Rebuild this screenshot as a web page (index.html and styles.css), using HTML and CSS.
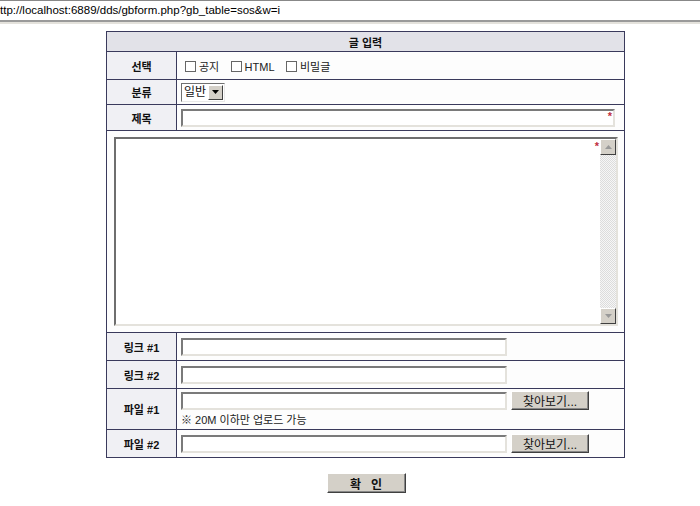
FILE: index.html
```html
<!DOCTYPE html>
<html lang="ko">
<head>
  <meta charset="UTF-8" />
  <title>gbform</title>
  <link rel="stylesheet" href="styles.css">
</head>
<body>
  <!-- 주소창 -->
  <div class="addr-bar">ttp://localhost:6889/dds/gbform.php?gb_table=sos&amp;w=i</div>

  <div class="wrap">
    <table class="form-table">
      <tr class="row-head">
        <th colspan="2">글 입력</th>
      </tr>
      <tr class="row-opt">
        <td class="label">선택</td>
        <td class="field">
          <span class="chk"></span><span class="chk-text">공지</span>
          <span class="chk"></span><span class="chk-text">HTML</span>
          <span class="chk"></span><span class="chk-text">비밀글</span>
        </td>
      </tr>
      <tr class="row-cat">
        <td class="label">분류</td>
        <td class="field">
          <span class="select"><span class="select-val">일반</span><span class="select-btn"><svg width="7" height="4" viewBox="0 0 7 4"><path d="M0 0H7L3.5 4Z" fill="#000"/></svg></span></span>
        </td>
      </tr>
      <tr class="row-subj">
        <td class="label">제목</td>
        <td class="field">
          <span class="need-wrap"><span class="input full"></span><span class="star">*</span></span>
        </td>
      </tr>
      <tr class="row-memo">
        <td colspan="2" class="memo-cell">
          <div class="memo">
            <div class="memo-text"></div>
            <span class="star memo-star">*</span>
            <div class="scroll">
              <span class="sc-btn"><svg width="7" height="4" viewBox="0 0 7 4"><path d="M0 4H7L3.5 0Z" fill="#999"/></svg></span>
              <span class="sc-track"></span>
              <span class="sc-btn"><svg width="7" height="4" viewBox="0 0 7 4"><path d="M0 0H7L3.5 4Z" fill="#999"/></svg></span>
            </div>
          </div>
        </td>
      </tr>
      <tr class="row-link">
        <td class="label">링크 #1</td>
        <td class="field"><span class="input"></span></td>
      </tr>
      <tr class="row-link">
        <td class="label">링크 #2</td>
        <td class="field"><span class="input"></span></td>
      </tr>
      <tr class="row-file1">
        <td class="label">파일 #1</td>
        <td class="field">
          <div class="file-line"><span class="input"></span><span class="btn">찾아보기...</span></div>
          <div class="note">※ 20M 이하만 업로드 가능</div>
        </td>
      </tr>
      <tr class="row-link">
        <td class="label">파일 #2</td>
        <td class="field">
          <div class="file-line"><span class="input"></span><span class="btn">찾아보기...</span></div>
        </td>
      </tr>
    </table>

    <div class="submit-row">
      <span class="btn submit">확&nbsp;&nbsp;&nbsp;인</span>
    </div>
  </div>
</body>
</html>
```

FILE: styles.css
```css
:root {
  --line: #3a3a5c;
  --head: #e2e2e8;
  --label: #f0f0f4;
  --face: #d4d0c8;
}
html, body {
  margin: 0; padding: 0;
  background: #fff;
  color: #111;
  font-family: 'Liberation Sans', 'Noto Sans CJK KR', sans-serif;
  font-size: 12px;
}
.addr-bar {
  height: 19px;
  line-height: 19px;
  font-size: 11.5px;
  color: #000;
  border-top: 1px solid #888;
  border-bottom: 2px solid #9a9a9a;
  box-shadow: 0 2px 0 #e4e2dc;
}
.wrap {
  width: 518px;
  margin: 9px 0 0 106px;
}
.form-table {
  width: 518px;
  border-collapse: collapse;
  border: 1px solid var(--line);
}
.form-table th, .form-table td {
  border: 1px solid var(--line);
  padding: 0;
}
.row-head th {
  height: 19px;
  background: var(--head);
  font-size: 11px;
  font-weight: bold;
  text-align: center;
}
.label {
  width: 69px;
  background: var(--label);
  text-align: center;
  font-size: 11px;
  font-weight: bold;
  color: #111;
}
.field {
  background: #fdfdfd;
  padding-left: 4px !important;
}
.row-opt td { height: 27px; }
.row-cat td { height: 24px; }
.row-subj td { height: 25px; }
.row-link td { height: 27px; }
.row-file1 td { height: 40px; }

.chk {
  display: inline-block;
  width: 9px; height: 9px;
  border: 1px solid #666;
  background: #fff;
  vertical-align: -1px;
  margin: 0 3px 0 4px;
}
.chk-text {
  font-size: 11px;
  margin-right: 4px;
  color: #222;
}

.select {
  display: inline-flex;
  align-items: center;
  height: 17px;
  border: 1px solid;
  border-color: #707070 #e8e8e8 #e8e8e8 #707070;
  background: #fff;
  vertical-align: middle;
}
.select-val { padding: 0 2px; line-height: 17px; }
.select-btn {
  width: 13px; height: 13px;
  margin-right: 1px;
  background: var(--face);
  border: 1px solid;
  border-color: #fff #404040 #404040 #fff;
  display: flex;
  align-items: center;
  justify-content: center;
}

.input {
  display: inline-block;
  box-sizing: border-box;
  width: 326px;
  height: 18px;
  border: 2px solid;
  border-color: #7a7a7a #e4e2dc #e4e2dc #7a7a7a;
  background: #fff;
  vertical-align: middle;
}
.input.full { width: 434px; }
.need-wrap {
  position: relative;
  display: inline-block;
  vertical-align: middle;
}
.need-wrap .input { display: block; }
.star {
  position: absolute;
  color: #c03040;
  font-size: 11px;
  line-height: 1;
  font-weight: bold;
}
.need-wrap .star { right: 3px; top: 2px; }

.memo-cell { padding: 6px 6px 6px 7px !important; background: #fdfdfd; }
.memo {
  position: relative;
  display: flex;
  box-sizing: border-box;
  width: 504px;
  height: 189px;
  border: 2px solid;
  border-color: #6e6e6e #e4e2dc #e4e2dc #6e6e6e;
  background: #fff;
}
.memo-text { flex: 1; }
.memo-star { right: 17px; top: 2px; }
.scroll {
  width: 16px;
  display: flex;
  flex-direction: column;
}
.sc-btn {
  box-sizing: border-box;
  height: 16px;
  background: var(--face);
  border: 1px solid;
  border-color: #fff #404040 #404040 #fff;
  display: flex;
  align-items: center;
  justify-content: center;
}
.sc-track {
  flex: 1;
  background-color: #f2f2f2;
  background-image: repeating-conic-gradient(#dcdcdc 0 25%, #f6f6f6 0 50%);
  background-size: 2px 2px;
}

.file-line {
  display: flex;
  align-items: center;
  gap: 4px;
}
.btn {
  display: inline-flex;
  align-items: center;
  justify-content: center;
  box-sizing: border-box;
  width: 78px;
  height: 19px;
  background: var(--face);
  border: 1px solid;
  border-color: #fff #404040 #404040 #fff;
  box-shadow: inset -1px -1px 0 #888;
  font-size: 12px;
  color: #111;
}
.note {
  margin-top: 1px;
  font-size: 11px;
  color: #222;
}
.submit-row {
  display: flex;
  justify-content: center;
  margin-top: 15px;
  padding-left: 2px;
}
.submit {
  width: 79px;
  height: 20px;
  font-weight: bold;
  font-size: 12px;
}
```
